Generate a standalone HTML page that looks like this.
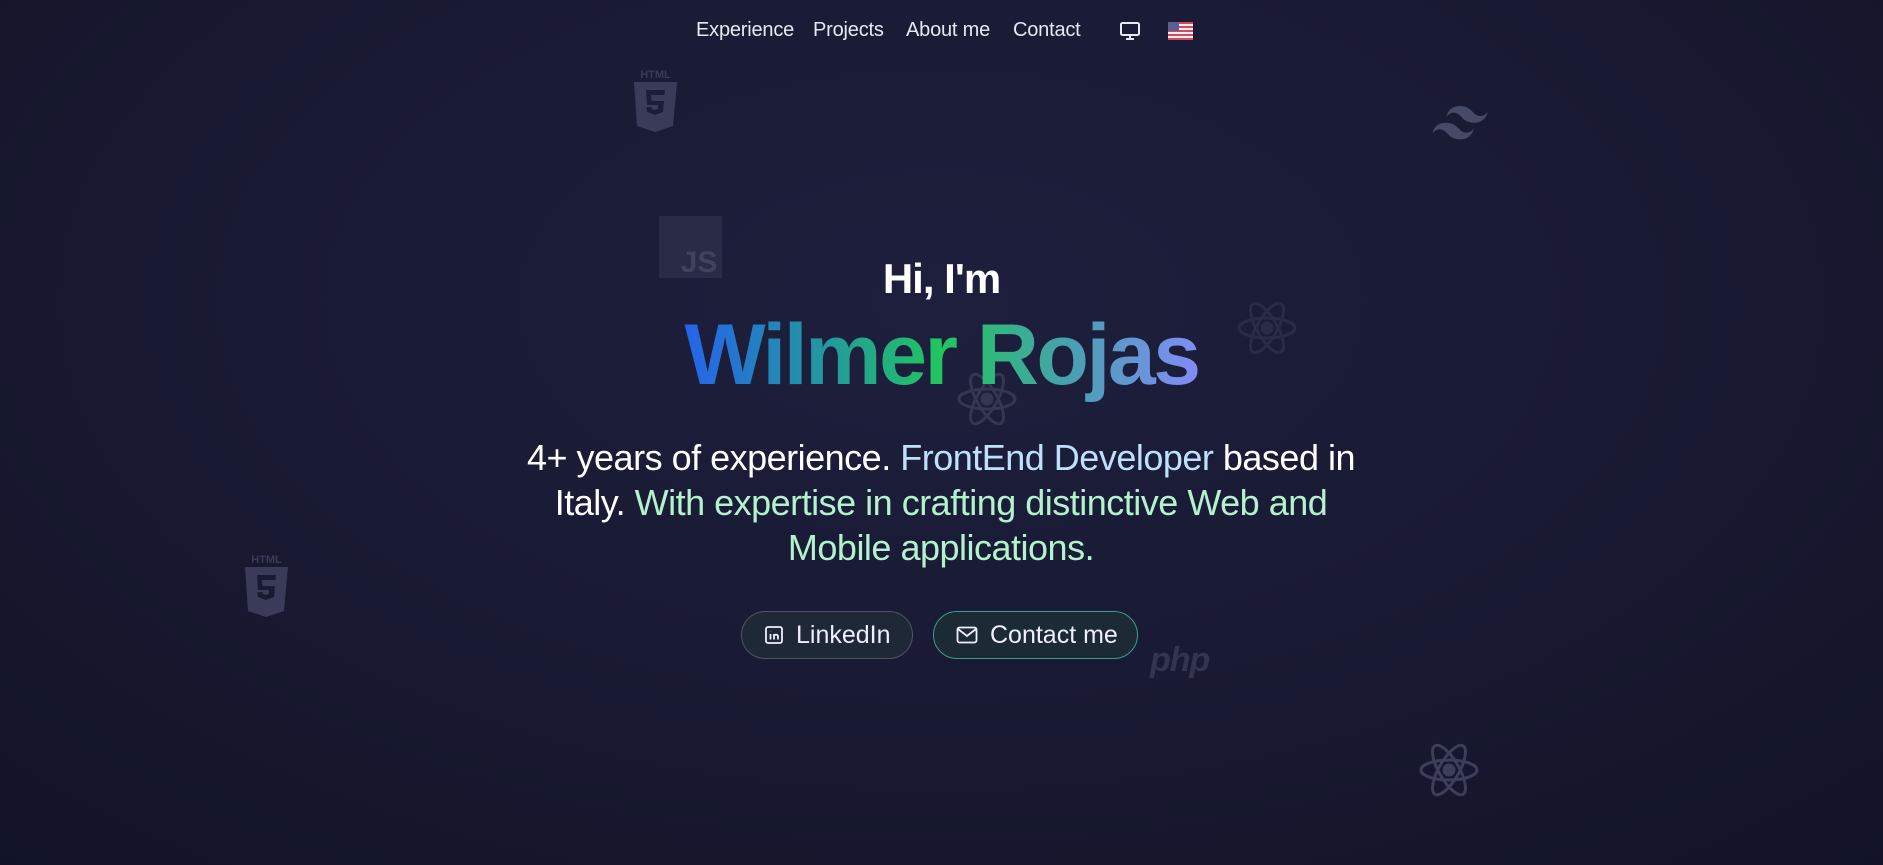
<!DOCTYPE html>
<html><head><meta charset="utf-8"><style>
*{margin:0;padding:0;box-sizing:border-box}
html,body{width:1883px;height:865px;overflow:hidden}
body{font-family:"Liberation Sans",Roboto,sans-serif;color:#fff;
background:radial-gradient(ellipse 75% 90% at 50% 35%,#1d1f3d 0%,#191a33 50%,#121326 100%);position:relative}
nav{position:absolute;top:0;left:0;width:100%;height:62px}
nav a{position:absolute;top:19px;font-size:20px;color:#e6e8f2;text-decoration:none;letter-spacing:-0.2px}
.ic{position:absolute;fill:#393b58}
h2{position:absolute;top:255px;width:100%;text-align:center;font-size:42px;font-weight:bold;letter-spacing:-1px}
h1{position:absolute;top:300px;left:0;width:100%;text-align:center;font-size:86px;font-weight:bold;letter-spacing:-2.5px;line-height:110px}
h1 span{background:linear-gradient(90deg,#2563eb 0%,#22c55e 50%,#48a0b0 75%,#818cf8 100%);-webkit-background-clip:text;background-clip:text;color:transparent}
p{position:absolute;top:435px;left:501px;width:880px;text-align:center;font-size:36px;line-height:45px;letter-spacing:-0.5px}
.b{color:#bfe0fb}.g{color:#b3f2cc}
.btn{position:absolute;top:611px;height:48px;border-radius:24px;font-size:25px;display:flex;align-items:center;padding-left:22px;color:#eef}
</style></head><body>
<nav>
<a style="left:696px">Experience</a>
<a style="left:813px">Projects</a>
<a style="left:906px">About me</a>
<a style="left:1013px">Contact</a>
<svg style="position:absolute;left:1119px;top:21px" width="22" height="20" viewBox="0 0 22 20" fill="none" stroke="#e6e8f2" stroke-width="2"><rect x="2" y="2" width="18" height="12" rx="1.5"/><path d="M7 18h8M11 14v4"/></svg>
<svg style="position:absolute;left:1168px;top:22px" width="25" height="18" viewBox="0 0 25 18"><rect width="25" height="18" fill="#f0f0f5"/><g fill="#d9485a"><rect y="0" width="25" height="2"/><rect y="4" width="25" height="2"/><rect y="8" width="25" height="2"/><rect y="12" width="25" height="2"/><rect y="16" width="25" height="2"/></g><rect width="11" height="9" fill="#5a5f96"/></svg>
</nav>

<svg class="ic" style="left:633px;top:68px" width="45" height="64" viewBox="0 0 45 64"><text x="22.5" y="10" font-size="11" font-weight="bold" text-anchor="middle" fill="#393b58" font-family="Liberation Sans">HTML</text><path d="M1 14h43l-4 44-18 6-18-6z"/><path d="M13 22h19l-.5 5H18l.5 6h12.5l-1 11-8 3-8-3-.5-5h5l.2 2 3 1 3-1 .4-4H14z" fill="#1c1d38"/></svg>
<svg class="ic" style="left:244px;top:553px" width="45" height="64" viewBox="0 0 45 64"><text x="22.5" y="10" font-size="11" font-weight="bold" text-anchor="middle" fill="#393b58" font-family="Liberation Sans">HTML</text><path d="M1 14h43l-4 44-18 6-18-6z"/><path d="M13 22h19l-.5 5H18l.5 6h12.5l-1 11-8 3-8-3-.5-5h5l.2 2 3 1 3-1 .4-4H14z" fill="#191a33"/></svg>
<svg class="ic" style="left:659px;top:216px" width="63" height="62" viewBox="0 0 63 62"><rect width="63" height="62" fill="#2a2c47"/><text x="40" y="56" font-size="30" font-weight="bold" text-anchor="middle" fill="#40425e" font-family="Liberation Sans">JS</text></svg>
<svg style="position:absolute;left:1432px;top:106px" width="56" height="34" viewBox="0 0 54 33"><path fill="#474a66" d="M27 0c-7.2 0-11.7 3.6-13.5 10.8 2.7-3.6 5.85-4.95 9.45-4.05 2.054.513 3.522 2.004 5.147 3.653C30.744 13.09 33.808 16.2 40.5 16.2c7.2 0 11.7-3.6 13.5-10.8-2.7 3.6-5.850 4.950-9.450 4.050-2.054-.513-3.522-2.004-5.147-3.653C36.756 3.110 33.692 0 27 0zM13.5 16.2C6.3 16.2 1.8 19.8 0 27c2.7-3.6 5.85-4.95 9.45-4.05 2.054.514 3.522 2.004 5.147 3.653C17.244 29.29 20.308 32.4 27 32.4c7.2 0 11.7-3.6 13.5-10.8-2.7 3.6-5.85 4.95-9.45 4.05-2.054-.513-3.522-2.004-5.147-3.653C23.256 19.31 20.192 16.2 13.5 16.2z"/></svg>

<svg style="position:absolute;left:1236px;top:297px" width="62" height="62" viewBox="-31 -31 62 62" fill="none" stroke="#2a2c47" stroke-width="3"><circle r="5" fill="#2a2c47"/><ellipse rx="28" ry="10"/><ellipse rx="28" ry="10" transform="rotate(60)"/><ellipse rx="28" ry="10" transform="rotate(120)"/></svg>
<svg style="position:absolute;left:956px;top:368px" width="62" height="62" viewBox="-31 -31 62 62" fill="none" stroke="#343652" stroke-width="3"><circle r="5" fill="#343652"/><ellipse rx="28" ry="10"/><ellipse rx="28" ry="10" transform="rotate(60)"/><ellipse rx="28" ry="10" transform="rotate(120)"/></svg>
<svg style="position:absolute;left:1418px;top:739px" width="62" height="62" viewBox="-31 -31 62 62" fill="none" stroke="#3c3e5a" stroke-width="3"><circle r="5" fill="#3c3e5a"/><ellipse rx="28" ry="10"/><ellipse rx="28" ry="10" transform="rotate(60)"/><ellipse rx="28" ry="10" transform="rotate(120)"/></svg>
<div style="position:absolute;left:1150px;top:641px;font-size:34px;font-weight:bold;font-style:italic;color:#33354f;letter-spacing:-1px">php</div>

<h2>Hi, I'm</h2>
<h1><span>Wilmer Rojas</span></h1>
<p>4+ years of experience. <span class="b">FrontEnd Developer</span> based in Italy. <span class="g">With expertise in crafting distinctive Web and Mobile applications.</span></p>

<div class="btn" style="left:741px;width:172px;border:1.5px solid #4f5468;background:#1f2836">
<svg width="20" height="20" viewBox="0 0 20 20" fill="none" stroke="#eef" stroke-width="1.8"><rect x="2" y="2" width="16" height="16" rx="2"/><path d="M6.5 9v5.5M6.5 6.2v.2M10 14.5V9M10 11.5c0-2.500 4-2.500 4 0v3"/></svg>
<span style="margin-left:12px">LinkedIn</span></div>
<div class="btn" style="left:933px;width:205px;border:1.5px solid #3c9c8c;background:#1b2a34">
<svg width="22" height="18" viewBox="0 0 22 18" fill="none" stroke="#eef" stroke-width="1.8"><rect x="1.5" y="1.5" width="19" height="15" rx="2"/><path d="M2 3l9 7 9-7"/></svg>
<span style="margin-left:12px">Contact me</span></div>
</body></html>
